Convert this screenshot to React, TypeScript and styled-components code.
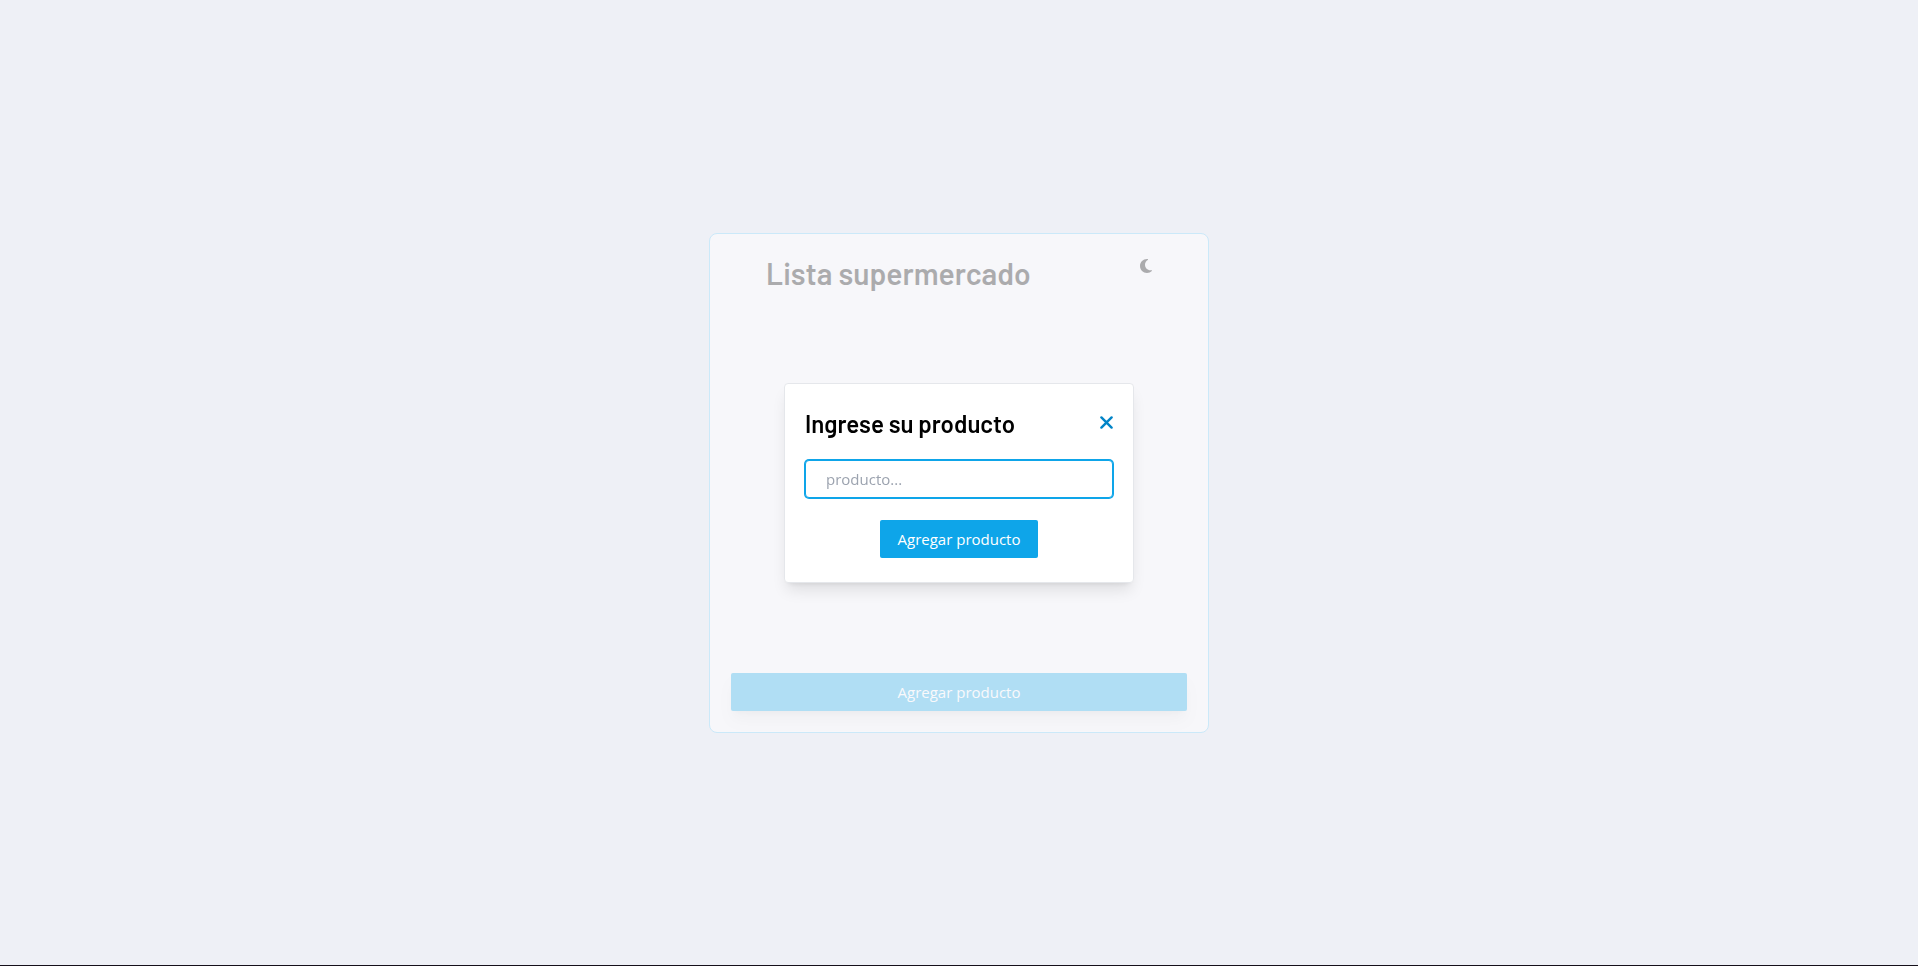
import React, { useState } from 'react';
import styled, { createGlobalStyle } from 'styled-components';
import { FaMoon } from 'react-icons/fa6';

const GlobalStyle = createGlobalStyle`
  *, *::before, *::after { box-sizing: border-box; }
  body {
    margin: 0;
    font-family: 'Segoe UI', 'Open Sans', 'Noto Sans', sans-serif;
    font-size: 15px;
    line-height: 24px;
    color: #000;
  }
  h1, h2 { margin: 0; font-family: Barlow, Roboto, sans-serif; font-weight: 600; }
  button { border: 0; padding: 0; background: none; font: inherit; color: inherit; cursor: pointer; }
`;

const Page = styled.main`
  min-height: 100vh;
  display: flex;
  align-items: center;
  justify-content: center;
  background: #eef0f6;
  border-bottom: 1px solid #15101a;
`;

const Card = styled.section`
  width: 100%;
  max-width: 500px;
  min-height: 500px;
  display: flex;
  border: 1px solid #cbe9f9;
  border-radius: 8px;
  background: #f7f7fa;
`;

const CardContent = styled.div<{ $dimmed: boolean }>`
  flex: 1;
  display: flex;
  flex-direction: column;
  justify-content: space-between;
  padding: 21px;
  opacity: ${({ $dimmed }) => ($dimmed ? 0.3 : 1)};
`;

const CardHeader = styled.header`
  display: flex;
  align-items: flex-start;
  justify-content: space-between;
  padding: 0 35px;
`;

const Title = styled.h1`
  font-size: 30px;
  line-height: 36px;
`;

const ThemeButton = styled.button`
  display: flex;
  padding: 3px 0;

  svg { width: 12px; height: 16px; }
`;

const CloseButton = styled.button`
  display: flex;
  padding: 8px 0;
  color: #0284c7;
`;

const PrimaryButton = styled.button<{ $raised?: boolean }>`
  height: 38px;
  padding: 0 18px;
  border-radius: 2px;
  background: #0ea5e9;
  color: #fff;
  box-shadow: ${({ $raised }) =>
    $raised ? '0 10px 15px -3px rgba(0, 0, 0, 0.1), 0 4px 6px -4px rgba(0, 0, 0, 0.1)' : 'none'};
`;

const Overlay = styled.div`
  position: fixed;
  inset: 0;
  display: flex;
  align-items: center;
  justify-content: center;
`;

const Modal = styled.form`
  width: 100%;
  max-width: 350px;
  display: flex;
  flex-direction: column;
  align-items: center;
  padding: 24px 20px;
  border: 1px solid #e5e7eb;
  border-radius: 4px;
  background: #fff;
  box-shadow: 0 10px 15px -3px rgba(0, 0, 0, 0.1), 0 4px 6px -4px rgba(0, 0, 0, 0.1);
`;

const ModalHeader = styled.header`
  align-self: stretch;
  display: flex;
  align-items: flex-start;
  justify-content: space-between;
  margin-bottom: 20px;
`;

const ModalTitle = styled.h2`
  font-size: 24px;
  line-height: 32px;
`;

const ProductInput = styled.input`
  align-self: stretch;
  height: 38px;
  margin: 0 0 22px;
  padding: 0 20px;
  border: 1px solid #0ea5e9;
  border-radius: 4px;
  box-shadow: 0 0 0 1px #0ea5e9;
  outline: none;
  background: #fff;
  font: inherit;

  &::placeholder { color: #9ca3af; opacity: 1; }
`;

function CloseIcon() {
  return (
    <svg width="13" height="13" viewBox="0 0 13 13" fill="none" aria-hidden="true">
      <path
        d="M1.4 1.4 11.6 11.6M11.6 1.4 1.4 11.6"
        stroke="currentColor"
        strokeWidth="2.4"
        strokeLinecap="round"
      />
    </svg>
  );
}

export default function App() {
  const [open, setOpen] = useState(true);
  const [product, setProduct] = useState('');

  return (
    <>
      <GlobalStyle />
      <Page>
        <Card>
          <CardContent $dimmed={open}>
            <CardHeader>
              <Title>Lista supermercado</Title>
              <ThemeButton type="button" aria-label="Modo oscuro">
                <FaMoon />
              </ThemeButton>
            </CardHeader>
            <PrimaryButton type="button" $raised onClick={() => setOpen(true)}>
              Agregar producto
            </PrimaryButton>
          </CardContent>
        </Card>
      </Page>
      {open && (
        <Overlay>
          <Modal
            role="dialog"
            aria-labelledby="modal-title"
            onSubmit={(event) => {
              event.preventDefault();
              setProduct('');
              setOpen(false);
            }}
          >
            <ModalHeader>
              <ModalTitle id="modal-title">Ingrese su producto</ModalTitle>
              <CloseButton type="button" aria-label="Cerrar" onClick={() => setOpen(false)}>
                <CloseIcon />
              </CloseButton>
            </ModalHeader>
            <ProductInput
              type="text"
              aria-label="Producto"
              placeholder="producto..."
              value={product}
              onChange={(event) => setProduct(event.target.value)}
            />
            <PrimaryButton type="submit">Agregar producto</PrimaryButton>
          </Modal>
        </Overlay>
      )}
    </>
  );
}
